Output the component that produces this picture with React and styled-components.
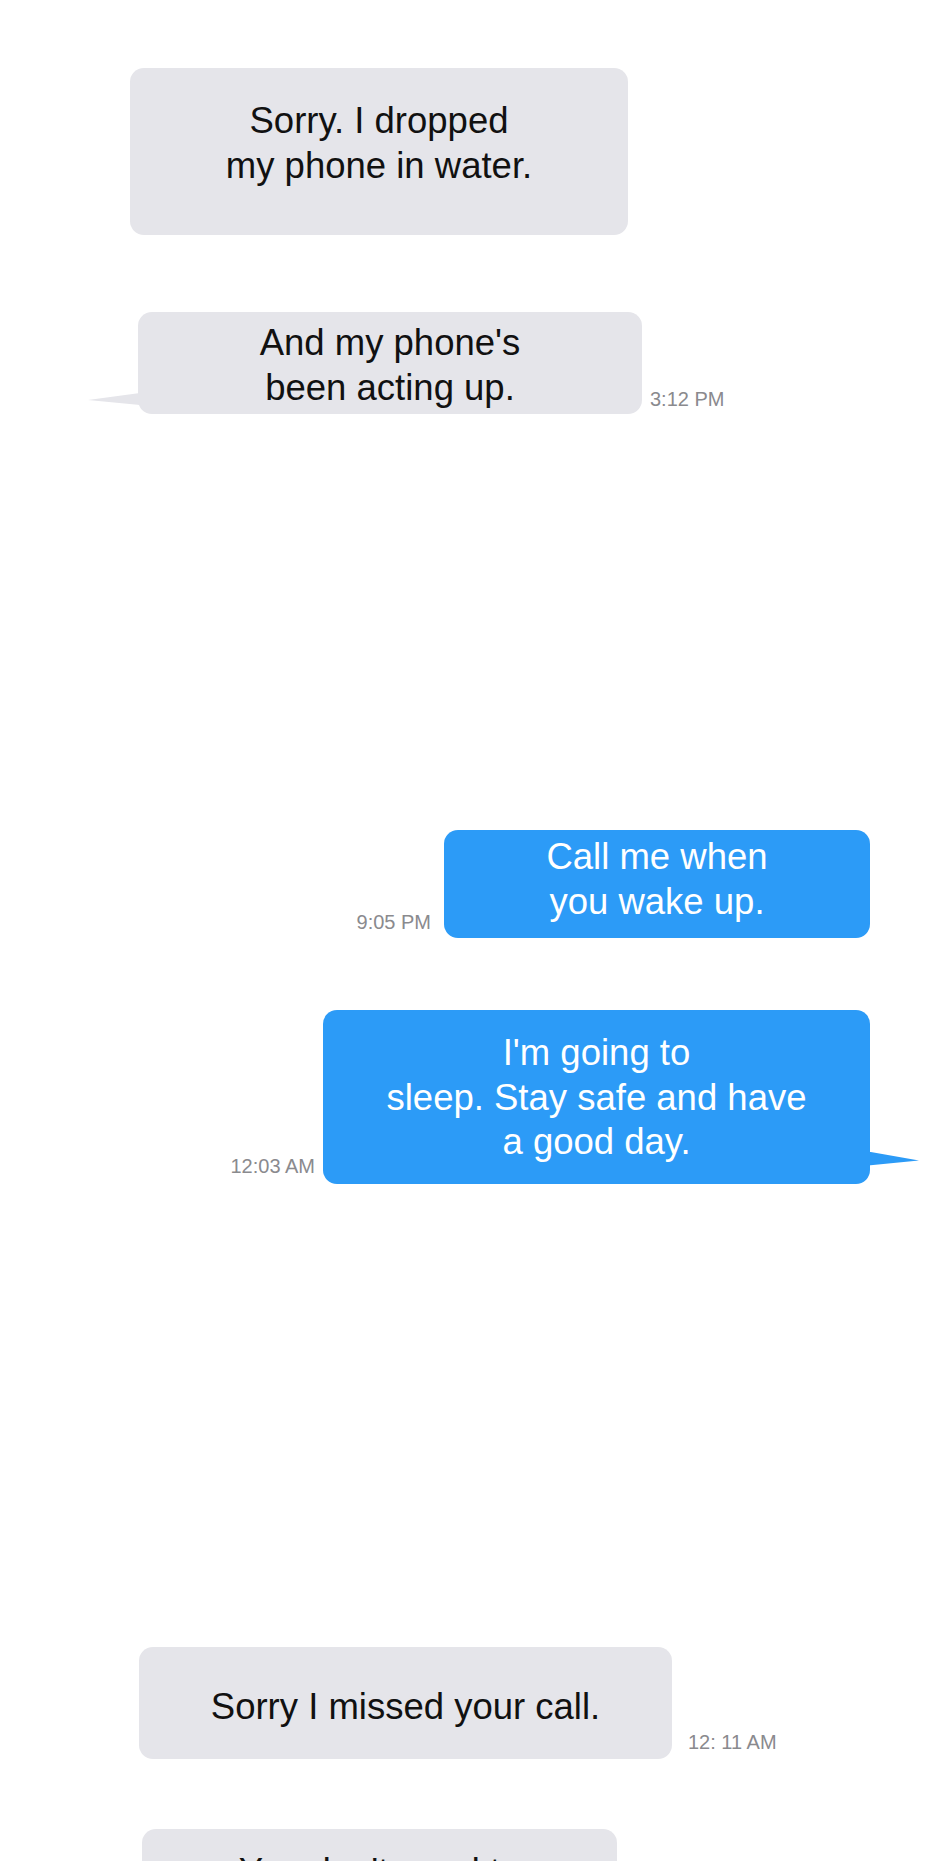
import styled, { createGlobalStyle, css } from 'styled-components';

const GlobalStyle = createGlobalStyle`
  html, body {
    margin: 0;
    padding: 0;
    background: #ffffff;
    font-family: "Liberation Sans", Arial, sans-serif;
  }
  body {
    overflow: hidden;
  }
`;

const messages = [
  {
    id: 1,
    from: 'them',
    lines: ['Sorry. I dropped', 'my phone in water.'],
    width: 498,
    pad: [31, 47],
    offset: 130,
    gap: 68,
  },
  {
    id: 2,
    from: 'them',
    lines: ["And my phone's", 'been acting up.'],
    width: 504,
    pad: [9, 4],
    offset: 138,
    gap: 77,
    tail: true,
    time: '3:12 PM',
    timeGap: 8,
    timeDrop: 4,
  },
  {
    id: 3,
    from: 'me',
    lines: ['Call me when', 'you wake up.'],
    width: 426,
    pad: [5, 14],
    offset: 70,
    gap: 416,
    time: '9:05 PM',
    timeGap: 13,
    timeDrop: 5,
  },
  {
    id: 4,
    from: 'me',
    lines: ["I'm going to", 'sleep. Stay safe and have', 'a good day.'],
    width: 547,
    pad: [21, 19],
    offset: 70,
    gap: 72,
    tail: true,
    time: '12:03 AM',
    timeGap: 8,
    timeDrop: 7,
  },
  {
    id: 5,
    from: 'them',
    lines: ['Sorry I missed your call.'],
    width: 533,
    pad: [38, 30],
    offset: 139,
    gap: 463,
    time: '12: 11 AM',
    timeGap: 16,
    timeDrop: 6,
  },
  {
    id: 6,
    from: 'them',
    lines: ["You don't need to", 'be sorry.'],
    width: 475,
    pad: [21, 30],
    offset: 142,
    gap: 70,
  },
];

const App = () => {
  return (
    <>
      <GlobalStyle />
      <Thread>
        {messages.map((m) => {
          const time = m.time && (
            <Time $from={m.from} $gap={m.timeGap} $drop={m.timeDrop}>
              {m.time}
            </Time>
          );
          return (
            <Row key={m.id} $from={m.from} $offset={m.offset} $gap={m.gap}>
              {m.from === 'me' && time}
              <Bubble
                $from={m.from}
                $tail={m.tail}
                $width={m.width}
                $padTop={m.pad[0]}
                $padBottom={m.pad[1]}
              >
                {m.lines.map((line, i) => (
                  <Line key={i}>{line}</Line>
                ))}
              </Bubble>
              {m.from === 'them' && time}
            </Row>
          );
        })}
      </Thread>
    </>
  );
};

const Thread = styled.div`
  width: 940px;
  display: flex;
  flex-direction: column;
`;

const Row = styled.div`
  display: flex;
  align-items: flex-end;
  margin-top: ${(p) => p.$gap}px;
  ${(p) =>
    p.$from === 'me'
      ? css`
          justify-content: flex-end;
          padding-right: ${p.$offset}px;
        `
      : css`
          justify-content: flex-start;
          padding-left: ${p.$offset}px;
        `}
`;

const Bubble = styled.div`
  position: relative;
  box-sizing: border-box;
  width: ${(p) => p.$width}px;
  padding: ${(p) => p.$padTop}px 20px ${(p) => p.$padBottom}px;
  border-radius: 14px;
  display: flex;
  flex-direction: column;
  align-items: center;
  text-align: center;
  font-size: 36.5px;
  line-height: 44.5px;
  background: ${(p) => (p.$from === 'me' ? '#2c9bf7' : '#e5e5ea')};
  color: ${(p) => (p.$from === 'me' ? '#ffffff' : '#111111')};

  ${(p) =>
    p.$tail &&
    p.$from === 'them' &&
    css`
      &::before {
        content: '';
        position: absolute;
        left: -50px;
        bottom: 9px;
        width: 52px;
        height: 12px;
        background: #e5e5ea;
        clip-path: polygon(0 58%, 100% 0, 100% 100%);
      }
    `}

  ${(p) =>
    p.$tail &&
    p.$from === 'me' &&
    css`
      &::after {
        content: '';
        position: absolute;
        right: -49px;
        bottom: 18px;
        width: 51px;
        height: 14px;
        background: #2c9bf7;
        clip-path: polygon(0 0, 100% 64%, 0 100%);
      }
    `}
`;

const Line = styled.span`
  display: block;
  white-space: nowrap;
`;

const Time = styled.span`
  margin-bottom: ${(p) => p.$drop}px;
  ${(p) =>
    p.$from === 'me'
      ? css`
          margin-right: ${p.$gap}px;
        `
      : css`
          margin-left: ${p.$gap}px;
        `}
  font-size: 20px;
  line-height: 22px;
  color: #8a8a8e;
  white-space: nowrap;
`;

export default App;
